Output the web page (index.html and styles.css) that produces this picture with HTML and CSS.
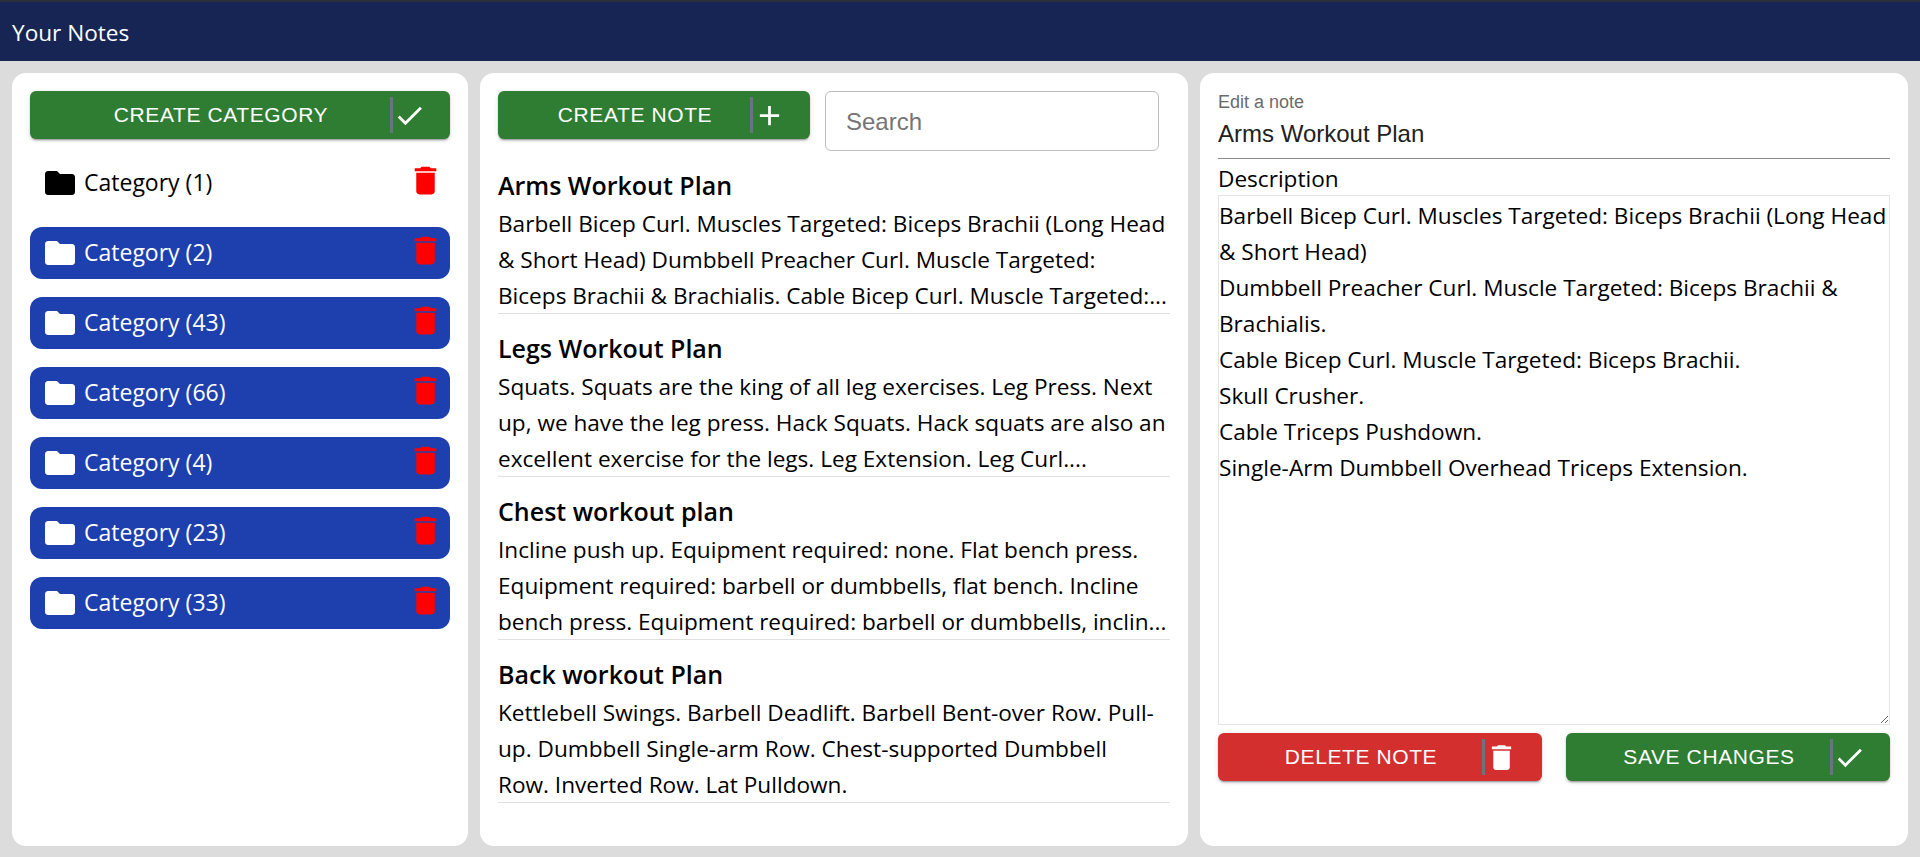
FILE: index.html
```html
<!DOCTYPE html>
<html>

<head>
    <meta charset="utf-8">
    <title>Your Notes</title>
    <link rel="stylesheet" href="styles.css">
</head>

<body>
    <header class="topbar">Your Notes</header>
    <main class="columns">
        <section class="panel categories">
            <button class="action green">
                <span class="action-label">CREATE CATEGORY</span>
                <span class="action-icon">
                    <svg viewBox="0 0 24 24"><path d="M9 16.17 4.83 12l-1.42 1.41L9 19 21 7l-1.41-1.41z"/></svg>
                </span>
            </button>
            <ul class="category-list">
                <li class="category">
                    <svg class="folder" viewBox="0 0 24 24"><path d="M10 4H4c-1.1 0-1.99.9-1.99 2L2 18c0 1.1.9 2 2 2h16c1.1 0 2-.9 2-2V8c0-1.1-.9-2-2-2h-8l-2-2z"/></svg>
                    <span class="category-name">Category (1)</span>
                    <svg class="trash" viewBox="0 0 24 24"><path d="M6 19c0 1.1.9 2 2 2h8c1.1 0 2-.9 2-2V7H6v12zM19 4h-3.5l-1-1h-5l-1 1H5v2h14V4z"/></svg>
                </li>
                <li class="category active">
                    <svg class="folder" viewBox="0 0 24 24"><path d="M10 4H4c-1.1 0-1.99.9-1.99 2L2 18c0 1.1.9 2 2 2h16c1.1 0 2-.9 2-2V8c0-1.1-.9-2-2-2h-8l-2-2z"/></svg>
                    <span class="category-name">Category (2)</span>
                    <svg class="trash" viewBox="0 0 24 24"><path d="M6 19c0 1.1.9 2 2 2h8c1.1 0 2-.9 2-2V7H6v12zM19 4h-3.5l-1-1h-5l-1 1H5v2h14V4z"/></svg>
                </li>
                <li class="category active">
                    <svg class="folder" viewBox="0 0 24 24"><path d="M10 4H4c-1.1 0-1.99.9-1.99 2L2 18c0 1.1.9 2 2 2h16c1.1 0 2-.9 2-2V8c0-1.1-.9-2-2-2h-8l-2-2z"/></svg>
                    <span class="category-name">Category (43)</span>
                    <svg class="trash" viewBox="0 0 24 24"><path d="M6 19c0 1.1.9 2 2 2h8c1.1 0 2-.9 2-2V7H6v12zM19 4h-3.5l-1-1h-5l-1 1H5v2h14V4z"/></svg>
                </li>
                <li class="category active">
                    <svg class="folder" viewBox="0 0 24 24"><path d="M10 4H4c-1.1 0-1.99.9-1.99 2L2 18c0 1.1.9 2 2 2h16c1.1 0 2-.9 2-2V8c0-1.1-.9-2-2-2h-8l-2-2z"/></svg>
                    <span class="category-name">Category (66)</span>
                    <svg class="trash" viewBox="0 0 24 24"><path d="M6 19c0 1.1.9 2 2 2h8c1.1 0 2-.9 2-2V7H6v12zM19 4h-3.5l-1-1h-5l-1 1H5v2h14V4z"/></svg>
                </li>
                <li class="category active">
                    <svg class="folder" viewBox="0 0 24 24"><path d="M10 4H4c-1.1 0-1.99.9-1.99 2L2 18c0 1.1.9 2 2 2h16c1.1 0 2-.9 2-2V8c0-1.1-.9-2-2-2h-8l-2-2z"/></svg>
                    <span class="category-name">Category (4)</span>
                    <svg class="trash" viewBox="0 0 24 24"><path d="M6 19c0 1.1.9 2 2 2h8c1.1 0 2-.9 2-2V7H6v12zM19 4h-3.5l-1-1h-5l-1 1H5v2h14V4z"/></svg>
                </li>
                <li class="category active">
                    <svg class="folder" viewBox="0 0 24 24"><path d="M10 4H4c-1.1 0-1.99.9-1.99 2L2 18c0 1.1.9 2 2 2h16c1.1 0 2-.9 2-2V8c0-1.1-.9-2-2-2h-8l-2-2z"/></svg>
                    <span class="category-name">Category (23)</span>
                    <svg class="trash" viewBox="0 0 24 24"><path d="M6 19c0 1.1.9 2 2 2h8c1.1 0 2-.9 2-2V7H6v12zM19 4h-3.5l-1-1h-5l-1 1H5v2h14V4z"/></svg>
                </li>
                <li class="category active">
                    <svg class="folder" viewBox="0 0 24 24"><path d="M10 4H4c-1.1 0-1.99.9-1.99 2L2 18c0 1.1.9 2 2 2h16c1.1 0 2-.9 2-2V8c0-1.1-.9-2-2-2h-8l-2-2z"/></svg>
                    <span class="category-name">Category (33)</span>
                    <svg class="trash" viewBox="0 0 24 24"><path d="M6 19c0 1.1.9 2 2 2h8c1.1 0 2-.9 2-2V7H6v12zM19 4h-3.5l-1-1h-5l-1 1H5v2h14V4z"/></svg>
                </li>
            </ul>
        </section>

        <section class="panel notes">
            <div class="notes-toolbar">
                <button class="action green">
                    <span class="action-label">CREATE NOTE</span>
                    <span class="action-icon">
                        <svg viewBox="0 0 24 24"><path d="M19 13h-6v6h-2v-6H5v-2h6V5h2v6h6v2z"/></svg>
                    </span>
                </button>
                <input class="search" type="text" placeholder="Search">
            </div>
            <article class="note">
                <h2>Arms Workout Plan</h2>
                <p>Barbell Bicep Curl. Muscles Targeted: Biceps Brachii (Long Head &amp; Short Head) Dumbbell Preacher Curl. Muscle Targeted:<br>Biceps Brachii &amp; Brachialis. Cable Bicep Curl. Muscle Targeted:...</p>
            </article>
            <article class="note">
                <h2>Legs Workout Plan</h2>
                <p>Squats. Squats are the king of all leg exercises. Leg Press. Next up, we have the leg press. Hack Squats. Hack squats are also an excellent exercise for the legs. Leg Extension. Leg Curl....</p>
            </article>
            <article class="note">
                <h2>Chest workout plan</h2>
                <p>Incline push up. Equipment required: none. Flat bench press. Equipment required: barbell or dumbbells, flat bench. Incline bench press. Equipment required: barbell or dumbbells, inclin...</p>
            </article>
            <article class="note">
                <h2>Back workout Plan</h2>
                <p>Kettlebell Swings. Barbell Deadlift. Barbell Bent-over Row. Pull-up. Dumbbell Single-arm Row. Chest-supported Dumbbell<br>Row. Inverted Row. Lat Pulldown.</p>
            </article>
        </section>

        <section class="panel editor">
            <label class="title-field">
                <span class="title-label">Edit a note</span>
                <input class="title-input" type="text" value="Arms Workout Plan">
            </label>
            <label class="desc-label" for="description">Description</label>
            <textarea class="desc-input" id="description">Barbell Bicep Curl. Muscles Targeted: Biceps Brachii (Long Head &amp; Short Head)
Dumbbell Preacher Curl. Muscle Targeted: Biceps Brachii &amp; Brachialis.
Cable Bicep Curl. Muscle Targeted: Biceps Brachii.
Skull Crusher.
Cable Triceps Pushdown.
Single-Arm Dumbbell Overhead Triceps Extension.</textarea>
            <div class="editor-actions">
                <button class="action red">
                    <span class="action-label">DELETE NOTE</span>
                    <span class="action-icon">
                        <svg viewBox="0 0 24 24"><path d="M6 19c0 1.1.9 2 2 2h8c1.1 0 2-.9 2-2V7H6v12zM19 4h-3.5l-1-1h-5l-1 1H5v2h14V4z"/></svg>
                    </span>
                </button>
                <button class="action green">
                    <span class="action-label">SAVE CHANGES</span>
                    <span class="action-icon">
                        <svg viewBox="0 0 24 24"><path d="M9 16.17 4.83 12l-1.42 1.41L9 19 21 7l-1.41-1.41z"/></svg>
                    </span>
                </button>
            </div>
        </section>
    </main>
</body>

</html>
```

FILE: styles.css
```css
* {
    box-sizing: border-box;
}

html,
body {
    height: 100%;
    margin: 0px;
}

body {
    display: flex;
    flex-direction: column;
    background: #dcdcdc;
    font-family: "Open Sans", "Noto Sans", sans-serif;
    overflow: hidden;
}

.topbar {
    height: 61px;
    padding: 2px 12px 0px;
    display: flex;
    align-items: center;
    background: #172554;
    border-top: 2px solid #2b2f3a;
    color: #fff;
    font-size: 22.6px;
}

.columns {
    flex: 1;
    display: grid;
    grid-template-columns: 456px 708px 708px;
    gap: 12px;
    padding: 12px 12px 11px;
    min-height: 0;
}

.panel {
    background: #fff;
    border-radius: 14px;
    padding: 18px;
    min-height: 0;
}

/* buttons */
.action {
    display: flex;
    align-items: center;
    width: 100%;
    height: 48px;
    padding: 0px 0px 0px 22px;
    border: none;
    border-radius: 6px;
    color: #fff;
    font-family: "Liberation Sans", Arial, sans-serif;
    font-size: 21px;
    letter-spacing: 0.6px;
    box-shadow: 0px 3px 1px -2px rgba(0, 0, 0, 0.2), 0px 2px 2px rgba(0, 0, 0, 0.14), 0px 1px 5px rgba(0, 0, 0, 0.12);
}

.green {
    background: #2e7d32;
}

.red {
    background: #d32f2f;
}

.action-label {
    flex: 1;
    text-align: center;
}

.action-icon {
    width: 60px;
    height: 36px;
    display: flex;
    align-items: center;
    border-left: 3px solid #6b7280;
}

.action-icon svg {
    width: 33px;
    height: 33px;
    fill: #fff;
}

/* categories */
.category-list {
    list-style: none;
    margin: 18px 0px 0px;
    padding: 0px;
    display: flex;
    flex-direction: column;
    gap: 18px;
}

.category {
    height: 52px;
    display: flex;
    align-items: center;
    gap: 6px;
    padding: 0px 6px 0px 12px;
    border-radius: 12px;
    font-size: 23px;
    color: #000;
}

.category.active {
    background: #1e40af;
    color: #fff;
}

.folder {
    width: 36px;
    height: 36px;
    fill: currentColor;
}

.category-name {
    flex: 1;
    margin-top: -2px;
}

.trash {
    width: 37px;
    height: 37px;
    margin-top: -5px;
    fill: #f00;
}

/* notes */
.notes-toolbar {
    display: flex;
    align-items: flex-start;
    gap: 15px;
}

.notes-toolbar .action {
    width: 312px;
}

.search {
    width: 334px;
    height: 60px;
    padding: 1px 20px 0px;
    border: 1px solid #bdbdbd;
    border-radius: 6px;
    font-family: "Liberation Sans", Arial, sans-serif;
    font-size: 24px;
}

.search::placeholder {
    color: #757575;
}

.note {
    height: 163px;
    padding-top: 14px;
    border-bottom: 1px solid #e0e0e0;
}

.note h2 {
    margin: 0px;
    font-size: 25px;
    font-weight: 600;
    line-height: 40px;
    color: #000;
}

.note p {
    margin: 1px 0px 0px;
    font-size: 22.6px;
    line-height: 36px;
    color: #000;
}

/* editor */
.editor {
    display: flex;
    flex-direction: column;
    padding-top: 20px;
}

.title-field {
    display: flex;
    flex-direction: column;
    height: 66px;
    border-bottom: 1px solid #8a8a8a;
}

.title-label {
    font-family: "Liberation Sans", Arial, sans-serif;
    font-size: 18px;
    line-height: 18px;
    color: #6b6b6b;
}

.title-input {
    border: none;
    outline: none;
    padding: 9px 0px 0px;
    font-family: "Liberation Sans", Arial, sans-serif;
    font-size: 24px;
    color: #212121;
}

.desc-label {
    height: 31px;
    margin-top: 5px;
    font-size: 22.6px;
    line-height: 30px;
    color: #000;
}

.desc-input {
    height: 530px;
    padding: 2px 0px 0px;
    border: 1px solid #e5e5e5;
    font-family: "Open Sans", "Noto Sans", sans-serif;
    font-size: 22.6px;
    line-height: 36px;
    color: #000;
    outline: none;
}

.editor-actions {
    display: grid;
    grid-template-columns: 324px 324px;
    gap: 24px;
    margin-top: 8px;
}
```
